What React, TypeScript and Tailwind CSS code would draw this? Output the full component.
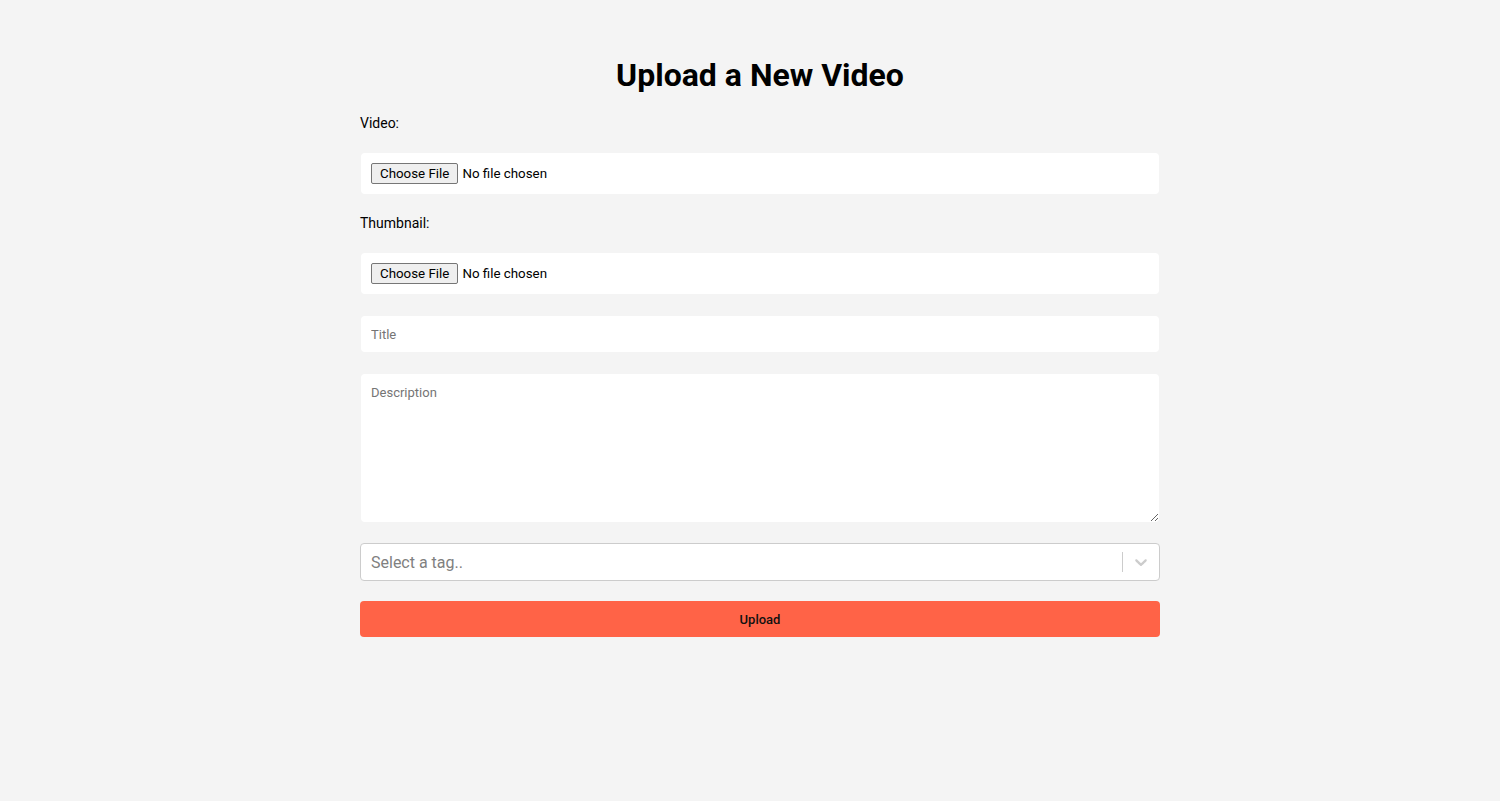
import React from "react";

export default function App() {
  return (
    <div className="min-h-[801px] w-full bg-[#f4f4f4] pl-[20px] font-['Roboto',sans-serif] text-black">
      <div className="mx-auto w-[800px] pt-[56px]">
        <h1 className="text-center text-[32px] font-bold leading-[38px]">Upload a New Video</h1>
        <label className="mt-[19px] block text-[14px] leading-[20px]">Video:</label>
        <input
          type="file"
          className="mx-px mt-[20px] block w-[798px] rounded-[4px] bg-white p-[10px] text-[13.33px] leading-[20px] file:mr-[4px] file:rounded-[2px] file:border file:border-solid file:border-[#767676] file:bg-[#efefef] file:px-[8px] file:py-px file:text-[13.33px] file:leading-[17px]"
        />
        <label className="mt-[19px] block text-[14px] leading-[20px]">Thumbnail:</label>
        <input
          type="file"
          className="mx-px mt-[20px] block w-[798px] rounded-[4px] bg-white p-[10px] text-[13.33px] leading-[20px] file:mr-[4px] file:rounded-[2px] file:border file:border-solid file:border-[#767676] file:bg-[#efefef] file:px-[8px] file:py-px file:text-[13.33px] file:leading-[17px]"
        />
        <input
          type="text"
          placeholder="Title"
          className="mx-px mt-[22px] block h-[36px] w-[798px] rounded-[4px] bg-white px-[10px] text-[13px] outline-none placeholder:text-[#757575]"
        />
        <textarea
          placeholder="Description"
          className="mx-px mt-[22px] block h-[148px] w-[798px] rounded-[4px] bg-white px-[10px] pt-[11px] pb-[10px] text-[13px] leading-[16px] outline-none placeholder:text-[#757575]"
        />
        <div className="mt-[21px] flex h-[38px] items-center rounded-[4px] border border-[#cccccc] bg-white">
          <div className="flex-1 px-[10px] pt-[2px] text-[16px] text-[#808080]">Select a tag..</div>
          <span className="h-[20px] w-px bg-[#cccccc]" />
          <div className="p-[8px] text-[#cccccc]">
            <svg width="20" height="20" viewBox="0 0 20 20" fill="currentColor">
              <path d="M4.516 7.548c0.436-0.446 1.043-0.481 1.576 0l3.908 3.747 3.908-3.747c0.533-0.481 1.141-0.446 1.574 0 0.436 0.445 0.408 1.197 0 1.615-0.406 0.418-4.695 4.502-4.695 4.502-0.217 0.223-0.502 0.335-0.787 0.335s-0.57-0.112-0.789-0.335c0 0-4.287-4.084-4.695-4.502s-0.436-1.17 0-1.615z" />
            </svg>
          </div>
        </div>
        <button className="mt-[20px] block h-[36px] w-full rounded-[4px] bg-[#ff6347] pt-[2px] text-[13px] font-medium text-[#111]">
          Upload
        </button>
      </div>
    </div>
  );
}
